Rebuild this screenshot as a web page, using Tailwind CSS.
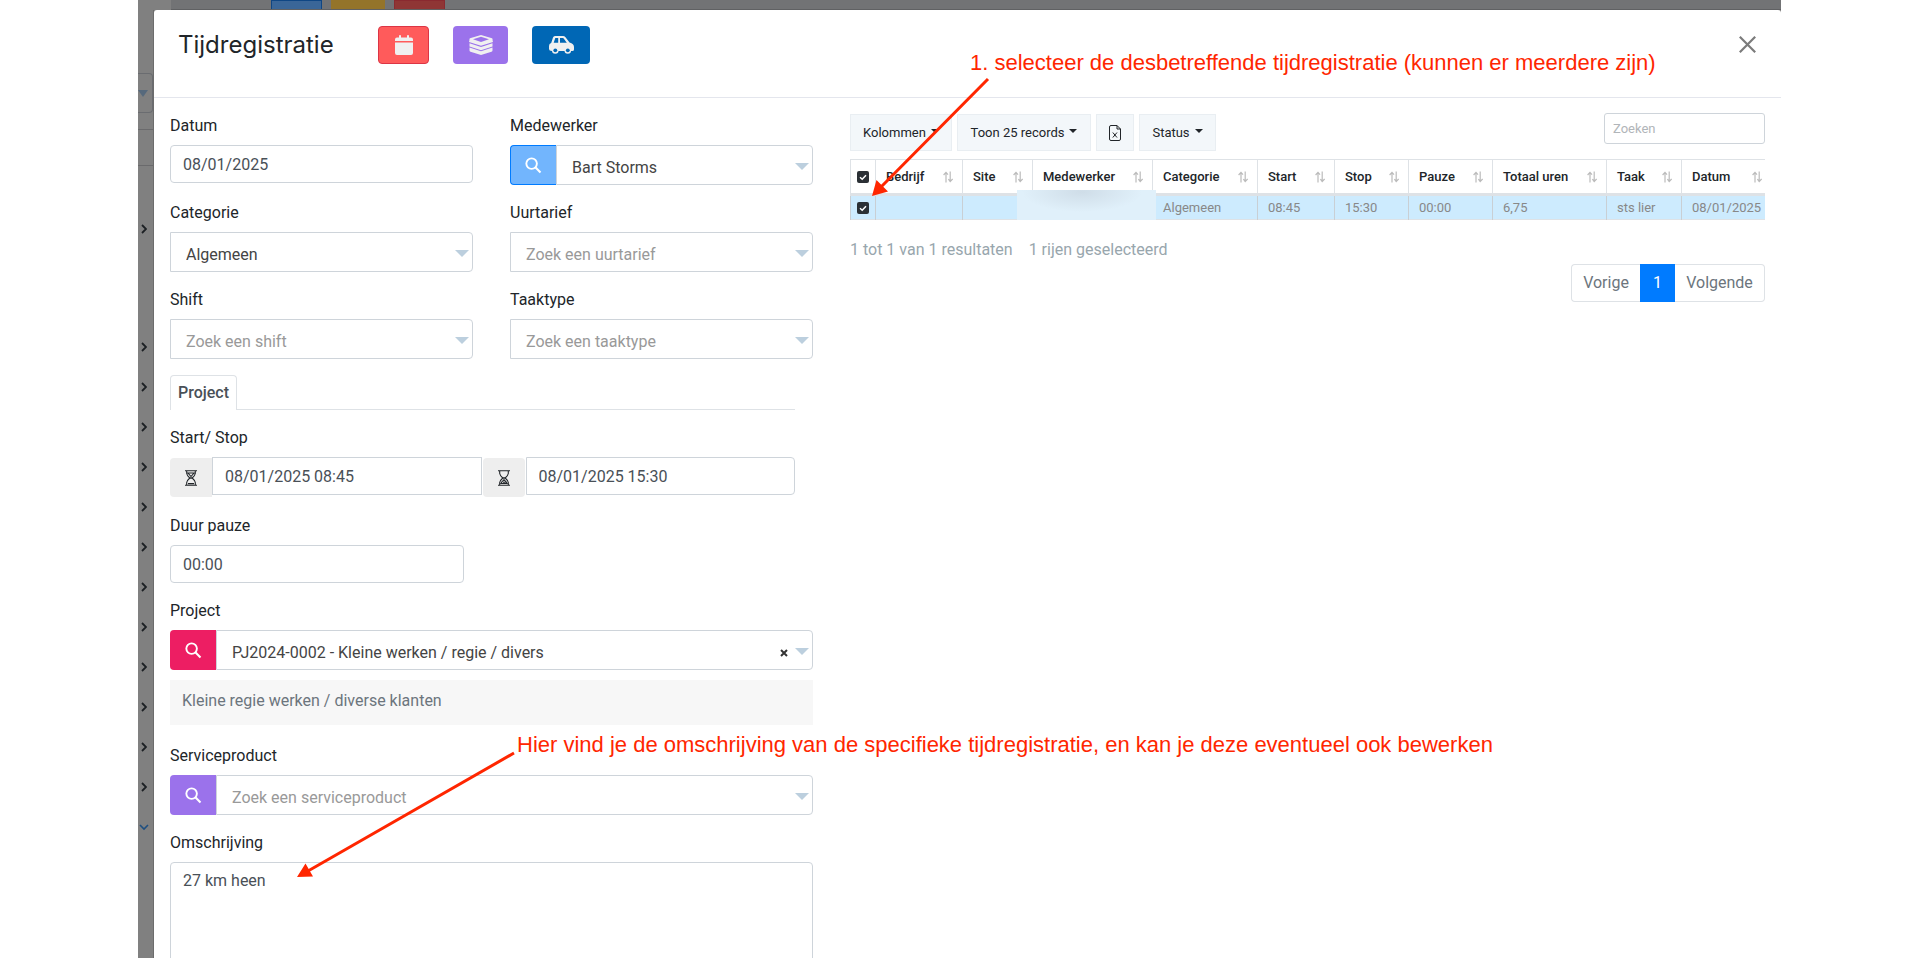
<!DOCTYPE html>
<html lang="nl">
<head>
<meta charset="utf-8">
<title>Tijdregistratie</title>
<script src="https://cdn.jsdelivr.net/npm/@tailwindcss/browser@4"></script>
</head>
<body class="relative h-screen overflow-hidden bg-white font-[Roboto,sans-serif] text-base leading-6 text-[#212529]">

<svg class="hidden" aria-hidden="true">
  <symbol id="search" viewBox="0 0 18 18"><circle cx="7" cy="7" r="5.6" fill="none" stroke="currentColor" stroke-width="2"/><path d="M11.2 11.2 16.4 16.4" stroke="currentColor" stroke-width="2.2"/></symbol>
  <symbol id="tri" viewBox="0 0 14 8" preserveAspectRatio="none"><path d="M0 0H14L7 8Z" fill="currentColor"/></symbol>
  <symbol id="chev" viewBox="0 0 6 10"><path d="M1 1 5 5 1 9" fill="none" stroke="currentColor" stroke-width="1.8"/></symbol>
  <symbol id="sort" viewBox="0 0 10 12"><path d="M3 11.5V1.5M.6 4 3 1.3 5 3.6M7.2.5V10.5M5.4 8.2 7.2 10.6 9.6 8" fill="none" stroke="currentColor" stroke-width="1.2"/></symbol>
  <symbol id="check" viewBox="0 0 12 12"><path d="M3 6.2 5.2 8.2 9 4.2" fill="none" stroke="currentColor" stroke-width="1.5"/></symbol>
  <symbol id="caret" viewBox="0 0 8 4"><path d="M0 0H8L4 4Z" fill="currentColor"/></symbol>
</svg>

<div class="mx-[138px] flex h-full flex-col bg-[#808080]">
  <div class="flex h-[10px] shrink-0 pl-[33px]">
    <div class="flex flex-1 items-end gap-[9px] border-b border-[#606163] bg-[#727375] pl-[100px]">
      <span class="h-[9px] w-[51px] border border-b-0 border-[#0f4684] bg-[#3a6698]"></span>
      <span class="h-[9px] w-[54px] bg-[#94742a]"></span>
      <span class="h-[9px] w-[51px] border border-b-0 border-[#8a2a30] bg-[#8f3635]"></span>
    </div>
  </div>
  <div class="flex min-h-0 flex-1">
    <nav class="w-4 shrink-0 overflow-hidden border-r border-[#6c6c6c] text-[#1c2024]" aria-label="Zijbalk">
      <div class="mt-[63px] flex h-[40px] items-center rounded-r border border-l-0 border-[#6a6c70] text-[#56697c]"><svg class="h-[7px] w-[10px]"><use href="#tri"/></svg></div>
      <div class="mt-4 h-[37px] border-y border-[#6a6a6c]"></div>
      <ul>
        <li class="mt-[43px] mb-[78px] flex h-10 items-center pl-[3px]"><svg class="h-[10px] w-[6px]"><use href="#chev"/></svg></li>
        <li class="flex h-10 items-center pl-[3px]"><svg class="h-[10px] w-[6px]"><use href="#chev"/></svg></li>
        <li class="flex h-10 items-center pl-[3px]"><svg class="h-[10px] w-[6px]"><use href="#chev"/></svg></li>
        <li class="flex h-10 items-center pl-[3px]"><svg class="h-[10px] w-[6px]"><use href="#chev"/></svg></li>
        <li class="flex h-10 items-center pl-[3px]"><svg class="h-[10px] w-[6px]"><use href="#chev"/></svg></li>
        <li class="flex h-10 items-center pl-[3px]"><svg class="h-[10px] w-[6px]"><use href="#chev"/></svg></li>
        <li class="flex h-10 items-center pl-[3px]"><svg class="h-[10px] w-[6px]"><use href="#chev"/></svg></li>
        <li class="flex h-10 items-center pl-[3px]"><svg class="h-[10px] w-[6px]"><use href="#chev"/></svg></li>
        <li class="flex h-10 items-center pl-[3px]"><svg class="h-[10px] w-[6px]"><use href="#chev"/></svg></li>
        <li class="flex h-10 items-center pl-[3px]"><svg class="h-[10px] w-[6px]"><use href="#chev"/></svg></li>
        <li class="flex h-10 items-center pl-[3px]"><svg class="h-[10px] w-[6px]"><use href="#chev"/></svg></li>
        <li class="flex h-10 items-center pl-[3px]"><svg class="h-[10px] w-[6px]"><use href="#chev"/></svg></li>
        <li class="flex h-10 items-center pl-[3px]"><svg class="h-[10px] w-[6px]"><use href="#chev"/></svg></li>
        <li class="flex h-10 items-center pl-[1px] text-[#1f4f80]"><svg class="h-[10px] w-[10px]" viewBox="0 0 10 10"><path d="M1 3 5 7 9 3" fill="none" stroke="currentColor" stroke-width="1.6"/></svg></li>
      </ul>
    </nav>

    <main class="min-w-0 flex-1 overflow-hidden rounded-t-[3px] bg-white">
      <header class="flex h-[88px] items-start border-b border-[#e4e6ed] pt-4 pr-[25px] pl-6">
        <h1 class="flex h-[37px] w-[200px] items-center font-[Inter,sans-serif] text-[24px]">Tijdregistratie</h1>
        <div class="flex gap-6">
          <button type="button" aria-label="Kalender" class="flex h-[38px] w-[51px] items-center justify-center rounded border border-[#dc3545] bg-[#ff5b5b] text-[#f0f0f0]">
            <svg class="h-5 w-[18px]" viewBox="0 0 18 20"><path fill="currentColor" d="M2 2.4H4V.8Q4 0 5 0T6 .8V2.4H12V.8Q12 0 13 0T14 .8V2.4H16Q18 2.4 18 4.4V6H0V4.4Q0 2.4 2 2.4ZM0 7.4H18V18Q18 20 16 20H2Q0 20 0 18Z"/></svg>
          </button>
          <button type="button" aria-label="Materiaal" class="flex h-[38px] w-[55px] items-center justify-center rounded bg-[#9b72eb] text-[#f0f0f0]">
            <svg class="h-5 w-6" viewBox="0 0 24 20"><path fill="currentColor" fill-rule="evenodd" d="M12 0 23 3.200Q24 4 23.500 5L24 7 12 10.800 0 7 .5 5Q0 4 1 3.200ZM12 1.800 4 4.300 12 7 20 4.300Z"/><path fill="currentColor" d="M.5 8.300 12 11.900 23.500 8.300V11.600L12 15.200 .5 11.600ZM.5 12.600 12 16.200 23.500 12.600V15.600Q23.500 16.400 22.500 16.800L12 20 1.500 16.800Q.5 16.400.5 15.600Z"/></svg>
          </button>
          <button type="button" aria-label="Verplaatsing" class="flex h-[38px] w-[58px] items-center justify-center rounded bg-[#0067b5] text-[#f0f0f0]">
            <svg class="h-[18px] w-[25px]" viewBox="0 0 25 18"><path fill="currentColor" fill-rule="evenodd" d="M6 0H14Q15.5 0 16.5 1.2L20.5 6.5Q25 7.5 25 11V13.5Q25 15 23.3 15H3Q0 15 0 12.500V10Q0 7.500 2.200 7L4 1.500Q4.500 0 6 0ZM6.300 2 4.700 6.800H9.200V2ZM11 2V6.800H17.800L14.500 2.300Q14.200 2 13.800 2Z"/><circle cx="6.300" cy="14.500" r="3.300" fill="currentColor"/><circle cx="18.800" cy="14.500" r="3.300" fill="currentColor"/><circle cx="6.300" cy="14.300" r="1.900" fill="#0067b5"/><circle cx="18.800" cy="14.300" r="1.900" fill="#0067b5"/></svg>
          </button>
        </div>
        <button type="button" aria-label="Sluiten" class="ml-auto flex h-[37px] items-center text-[#7b7b7b]">
          <svg class="h-[17px] w-[17px]" viewBox="0 0 17 17"><path d="M.8.8 16.200 16.200M16.200.8.8 16.200" stroke="currentColor" stroke-width="2.200"/></svg>
        </button>
      </header>

      <div class="grid grid-cols-[643fr_915fr] gap-[37px] pt-[15px] pr-4 pl-4">
        <form class="pt-px">
          <div class="grid grid-cols-2 gap-x-[37px] gap-y-4">
            <div>
              <label for="datum" class="mb-[7px] block">Datum</label>
              <input id="datum" value="08/01/2025" class="block h-[38px] w-full rounded border border-[#ced4da] px-3 text-[#495057]">
            </div>
            <div>
              <label for="medewerker" class="mb-[7px] block">Medewerker</label>
              <div class="flex">
                <button type="button" aria-label="Zoek medewerker" class="flex h-10 w-[46px] items-center justify-center rounded-l border border-r-0 border-[#007bff] bg-[#72b5fd] text-white"><svg class="h-[17px] w-[17px]"><use href="#search"/></svg></button>
                <div class="relative flex-1"><select id="medewerker" class="h-10 w-full appearance-none rounded-r border border-[#ced4da] pt-[5px] pl-[15px] text-[#444]"><option>Bart Storms</option></select><svg class="pointer-events-none absolute top-[18px] right-1 h-[7px] w-[14px] text-[#bccfde]"><use href="#tri"/></svg></div>
              </div>
            </div>
            <div>
              <label for="categorie" class="mb-[7px] block">Categorie</label>
              <div class="relative"><select id="categorie" class="h-10 w-full appearance-none rounded-r border border-[#ced4da] pt-[5px] pl-[15px] text-[#444]"><option>Algemeen</option></select><svg class="pointer-events-none absolute top-[18px] right-1 h-[7px] w-[14px] text-[#bccfde]"><use href="#tri"/></svg></div>
            </div>
            <div>
              <label for="uurtarief" class="mb-[7px] block">Uurtarief</label>
              <div class="relative"><select id="uurtarief" class="h-10 w-full appearance-none rounded-r border border-[#ced4da] pt-[5px] pl-[15px] text-[#999]"><option>Zoek een uurtarief</option></select><svg class="pointer-events-none absolute top-[18px] right-1 h-[7px] w-[14px] text-[#bccfde]"><use href="#tri"/></svg></div>
            </div>
            <div>
              <label for="shift" class="mb-[7px] block">Shift</label>
              <div class="relative"><select id="shift" class="h-10 w-full appearance-none rounded-r border border-[#ced4da] pt-[5px] pl-[15px] text-[#999]"><option>Zoek een shift</option></select><svg class="pointer-events-none absolute top-[18px] right-1 h-[7px] w-[14px] text-[#bccfde]"><use href="#tri"/></svg></div>
            </div>
            <div>
              <label for="taaktype" class="mb-[7px] block">Taaktype</label>
              <div class="relative"><select id="taaktype" class="h-10 w-full appearance-none rounded-r border border-[#ced4da] pt-[5px] pl-[15px] text-[#999]"><option>Zoek een taaktype</option></select><svg class="pointer-events-none absolute top-[18px] right-1 h-[7px] w-[14px] text-[#bccfde]"><use href="#tri"/></svg></div>
            </div>
          </div>

          <div role="tablist" class="mt-4 mr-[18px] flex">
            <button type="button" role="tab" aria-selected="true" class="h-[35px] w-[67px] rounded-t border border-b-0 border-[#dee2e6] text-center font-medium text-[#495057]">Project</button>
            <span class="flex-1 border-b border-[#dee2e6]"></span>
          </div>

          <div class="mt-4 mr-[18px]">
            <label for="start" class="mb-[7px] block">Start/ Stop</label>
            <div class="flex h-10 items-start">
              <span class="mt-px flex h-[39px] w-[42px] items-center justify-center rounded-l bg-[#eee]"><svg class="h-4 w-3" viewBox="0 0 12 16" fill="none" stroke="#212529" stroke-width="1.100"><path d="M0 .7H12M0 15.300H12M1.700 1V3.500Q2 5.500 4.800 8 2 10.500 1.700 12.500V15M10.300 1V3.500Q10 5.500 7.200 8 10 10.500 10.300 12.500V15M3 3H9L6 6.500ZM6 7V9M3 13.600H9"/></svg></span>
              <input id="start" value="08/01/2025 08:45" class="h-[38px] min-w-0 flex-1 border border-[#ced4da] px-3 text-[#495057]">
              <span class="mx-px mt-px flex h-[39px] w-[42px] items-center justify-center rounded bg-[#eee]"><svg class="h-4 w-3" viewBox="0 0 12 16" fill="none" stroke="#212529" stroke-width="1.100"><path d="M0 .7H12M0 15.300H12M1.700 1V3.500Q2 5.500 4.800 8 2 10.500 1.700 12.500V15M10.300 1V3.500Q10 5.500 7.200 8 10 10.500 10.300 12.500V15M3 13.500Q4 11 6 10 8 11 9 13.500ZM6 7V10M5 12.300H7.500"/></svg></span>
              <input aria-label="Stop" value="08/01/2025 15:30" class="h-[38px] min-w-0 flex-1 rounded-r border border-[#ced4da] px-3 text-[#495057]">
            </div>
          </div>

          <div class="mt-[17px]">
            <label for="pauze" class="mb-[7px] block">Duur pauze</label>
            <input id="pauze" value="00:00" class="block h-[38px] w-[294px] rounded border border-[#ced4da] px-3 text-[#495057]">
          </div>

          <div class="mt-4">
            <label for="project" class="mb-[7px] block">Project</label>
            <div class="flex">
              <button type="button" aria-label="Zoek project" class="flex h-10 w-[46px] items-center justify-center rounded-l bg-[#ed1e63] text-white"><svg class="h-[17px] w-[17px]"><use href="#search"/></svg></button>
              <div class="relative flex-1"><select id="project" class="h-10 w-full appearance-none rounded-r border border-[#ced4da] pt-[5px] pl-[15px] text-[#444]"><option>PJ2024-0002 - Kleine werken / regie / divers</option></select><button type="button" aria-label="Wissen" class="absolute top-[19px] right-[25px] text-[#333]"><svg class="h-2 w-2" viewBox="0 0 8 8"><path d="M1 1 7 7M7 1 1 7" stroke="currentColor" stroke-width="2"/></svg></button><svg class="pointer-events-none absolute top-[18px] right-1 h-[7px] w-[14px] text-[#bccfde]"><use href="#tri"/></svg></div>
            </div>
            <p class="mt-[10px] h-[45px] bg-[#f7f7f7] px-3 pt-[9px] text-[#6c757d]">Kleine regie werken / diverse klanten</p>
          </div>

          <div class="mt-[19px]">
            <label for="service" class="mb-[7px] block">Serviceproduct</label>
            <div class="flex">
              <button type="button" aria-label="Zoek serviceproduct" class="flex h-10 w-[46px] items-center justify-center rounded-l bg-[#9b72eb] text-white"><svg class="h-[17px] w-[17px]"><use href="#search"/></svg></button>
              <div class="relative flex-1"><select id="service" class="h-10 w-full appearance-none rounded-r border border-[#ced4da] pt-[5px] pl-[15px] text-[#999]"><option>Zoek een serviceproduct</option></select><svg class="pointer-events-none absolute top-[18px] right-1 h-[7px] w-[14px] text-[#bccfde]"><use href="#tri"/></svg></div>
            </div>
          </div>

          <div class="mt-4">
            <label for="omschrijving" class="mb-[7px] block">Omschrijving</label>
            <textarea id="omschrijving" rows="5" class="block w-full resize-none rounded border border-[#ced4da] px-3 py-[6px] text-[#495057]">27 km heen</textarea>
          </div>
        </form>

        <section class="min-w-0">
          <div class="flex items-start gap-[5px] text-[13px]">
            <button type="button" class="mt-px flex h-[37px] w-[102px] items-center justify-center gap-[5px] border border-[#e9eef2] bg-[#f3f7fa]">Kolommen <svg class="mb-[3px] h-[4px] w-2"><use href="#caret"/></svg></button>
            <button type="button" class="mt-px flex h-[37px] w-[134px] items-center justify-center gap-[5px] border border-[#e9eef2] bg-[#f3f7fa]">Toon 25 records <svg class="mb-[3px] h-[4px] w-2"><use href="#caret"/></svg></button>
            <button type="button" aria-label="Exporteer naar Excel" class="mt-px flex h-[37px] w-[38px] items-center justify-center border border-[#e9eef2] bg-[#f3f7fa]"><svg class="h-4 w-3" viewBox="0 0 12 16" fill="none" stroke="#212529"><path d="M2 .5H8L11.500 4V14Q11.500 15.500 10 15.500H2Q.5 15.500.5 14V2Q.5.5 2 .5ZM8 .5V4H11.500M3.800 7.500 8 12.500M8 7.500 3.800 12.500"/></svg></button>
            <button type="button" class="mt-px flex h-[37px] w-[77px] items-center justify-center gap-[5px] border border-[#e9eef2] bg-[#f3f7fa]">Status <svg class="mb-[3px] h-[4px] w-2"><use href="#caret"/></svg></button>
            <input type="search" aria-label="Zoeken" placeholder="Zoeken" class="ml-auto h-[31px] w-[161px] rounded-[3px] border border-[#ced4da] px-2 text-[13px] placeholder:text-[#b1b5b9]">
          </div>

          <div class="relative mt-2 overflow-hidden">
            <table class="w-full table-fixed border-collapse text-left text-[13px] leading-5 whitespace-nowrap">
              <colgroup><col class="w-[25px]"><col class="w-[87px]"><col class="w-[70px]"><col class="w-[120px]"><col class="w-[105px]"><col class="w-[77px]"><col class="w-[74px]"><col class="w-[84px]"><col class="w-[114px]"><col class="w-[75px]"><col class="w-[84px]"></colgroup>
              <thead>
                <tr class="h-[35px] border-t border-b-3 border-[#dee2e6] *:border-l *:border-[#dee2e6] *:p-0 *:font-medium">
                  <th><label class="ml-[6px] grid w-3"><input type="checkbox" checked aria-label="Alles selecteren" class="col-start-1 row-start-1 h-3 w-3 appearance-none rounded-[2px] bg-[#2b3035]"><svg class="col-start-1 row-start-1 h-3 w-3 text-white"><use href="#check"/></svg></label></th>
                  <th><div class="flex items-center justify-between pr-[9px] pl-[10px]">Bedrijf <svg class="h-3 w-[10px] text-[#bbb]"><use href="#sort"/></svg></div></th>
                  <th><div class="flex items-center justify-between pr-[9px] pl-[10px]">Site <svg class="h-3 w-[10px] text-[#bbb]"><use href="#sort"/></svg></div></th>
                  <th><div class="flex items-center justify-between pr-[9px] pl-[10px]">Medewerker <svg class="h-3 w-[10px] text-[#bbb]"><use href="#sort"/></svg></div></th>
                  <th><div class="flex items-center justify-between pr-[9px] pl-[10px]">Categorie <svg class="h-3 w-[10px] text-[#bbb]"><use href="#sort"/></svg></div></th>
                  <th><div class="flex items-center justify-between pr-[9px] pl-[10px]">Start <svg class="h-3 w-[10px] text-[#bbb]"><use href="#sort"/></svg></div></th>
                  <th><div class="flex items-center justify-between pr-[9px] pl-[10px]">Stop <svg class="h-3 w-[10px] text-[#bbb]"><use href="#sort"/></svg></div></th>
                  <th><div class="flex items-center justify-between pr-[9px] pl-[10px]">Pauze <svg class="h-3 w-[10px] text-[#bbb]"><use href="#sort"/></svg></div></th>
                  <th><div class="flex items-center justify-between pr-[9px] pl-[10px]">Totaal uren <svg class="h-3 w-[10px] text-[#bbb]"><use href="#sort"/></svg></div></th>
                  <th><div class="flex items-center justify-between pr-[9px] pl-[10px]">Taak <svg class="h-3 w-[10px] text-[#bbb]"><use href="#sort"/></svg></div></th>
                  <th><div class="flex items-center justify-between pr-1 pl-[10px]">Datum <svg class="h-3 w-[10px] text-[#bbb]"><use href="#sort"/></svg></div></th>
                </tr>
              </thead>
              <tbody>
                <tr class="h-[25px] border-b border-[#dee2e6] bg-[#cdebfe] text-[#888] *:border-l *:border-[#c9cfd4] *:py-0 *:pr-0 *:pl-[10px]">
                  <td><label class="-ml-1 grid w-3"><input type="checkbox" checked aria-label="Rij selecteren" class="col-start-1 row-start-1 h-3 w-3 appearance-none rounded-[2px] bg-[#2b3035]"><svg class="col-start-1 row-start-1 h-3 w-3 text-white"><use href="#check"/></svg></label></td>
                  <td></td><td></td><td></td>
                  <td>Algemeen</td><td>08:45</td><td>15:30</td><td>00:00</td><td>6,75</td><td>sts lier</td><td>08/01/2025</td>
                </tr>
              </tbody>
            </table>
            <!-- Hidden employee name -->
            <div class="absolute bottom-0 left-[167px] h-[30px] w-[139px] bg-[#e0f0fa] bg-[radial-gradient(ellipse_60px_20px_at_65px_2px,#cfdde8,transparent)]"></div>
          </div>

          <div class="mt-[18px] flex gap-4 text-[#98a6ad]"><span>1 tot 1 van 1 resultaten</span><span>1 rijen geselecteerd</span></div>

          <nav aria-label="Paginering" class="mt-[2px] flex justify-end text-[#6c757d]">
            <button type="button" class="h-[38px] w-[69px] rounded-l border border-r-0 border-[#dee2e6]">Vorige</button>
            <button type="button" class="h-[38px] w-[35px] bg-[#007bff] text-white">1</button>
            <button type="button" class="h-[38px] w-[90px] rounded-r border border-l-0 border-[#dee2e6]">Volgende</button>
          </nav>
        </section>
      </div>
    </main>
  </div>
</div>

<!-- Instruction notes over the page -->
<div class="pointer-events-none absolute inset-0 font-['Liberation_Sans',sans-serif] text-[22px] whitespace-nowrap text-[#ff2600]">
  <svg class="absolute inset-0 h-full w-full" fill="currentColor" stroke="currentColor"><path d="M988 79 881 187M514 753 308 871" stroke-width="3"/><path stroke="none" d="M872 196 876.500 180 888 191.500ZM297 877 305.500 863.500 313 876.500Z"/></svg>
  <p class="absolute top-[51px] left-[970px]">1. selecteer de desbetreffende tijdregistratie (kunnen er meerdere zijn)</p>
  <p class="absolute top-[733px] left-[517px]">Hier vind je de omschrijving van de specifieke tijdregistratie, en kan je deze eventueel ook bewerken</p>
</div>
</body>
</html>
